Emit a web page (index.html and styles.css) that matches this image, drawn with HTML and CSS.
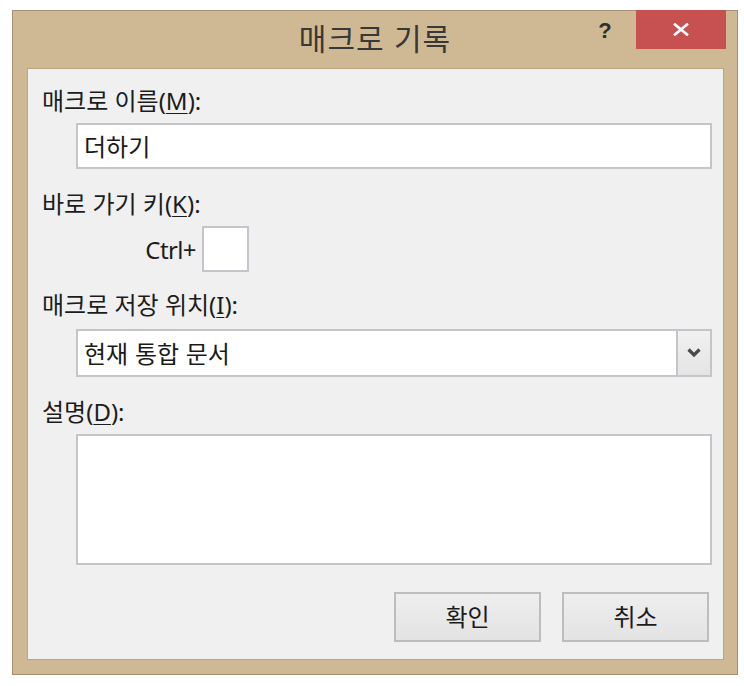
FILE: index.html
```html
<!DOCTYPE html>
<html lang="ko">
<head>
<meta charset="utf-8">
<title>매크로 기록</title>
<link rel="stylesheet" href="styles.css">
</head>
<body>
<div class="window">
  <div class="titlebar">
    <div class="tb-left"></div>
    <div class="title">매크로 기록</div>
    <div class="tb-right">
      <div class="help">?</div>
      <div class="close">
        <svg width="16" height="13" viewBox="0 0 16 13"><path d="M2 1.5 L14 11.5 M14 1.5 L2 11.5" stroke="#ffffff" stroke-width="2.6" stroke-linecap="square" fill="none"/></svg>
      </div>
    </div>
  </div>
  <div class="client">
    <div class="label first">매크로 이름(<u>M</u>):</div>
    <div class="field name">더하기</div>
    <div class="label">바로 가기 키(<u>K</u>):</div>
    <div class="shortcut">
      <span class="ctrl">Ctrl+</span>
      <div class="keybox"></div>
    </div>
    <div class="label loc">매크로 저장 위치(<u>I</u>):</div>
    <div class="field combo">
      <span class="combo-text">현재 통합 문서</span>
      <div class="arrow">
        <svg width="16" height="12" viewBox="0 0 16 12"><path d="M2.5 2.5 L8 8 L13.5 2.5" stroke="#4a4a4a" stroke-width="3.2" fill="none"/></svg>
      </div>
    </div>
    <div class="label desc">설명(<u>D</u>):</div>
    <div class="field memo"></div>
    <div class="buttons">
      <div class="btn">확인</div>
      <div class="btn">취소</div>
    </div>
  </div>
</div>
</body>
</html>
```

FILE: styles.css
```css
* { box-sizing: border-box; }

html, body {
  margin: 0;
  padding: 0;
  background: #ffffff;
}

body {
  font-family: "Noto Sans", "Noto Sans CJK KR", sans-serif;
  color: #1a1a1a;
}

.window {
  margin: 10px 0 0 12px;
  width: 726px;
  background: #cfb994;
  border: 1px solid #a4916f;
  display: flex;
  flex-direction: column;
}

.titlebar {
  height: 57px;
  display: grid;
  grid-template-columns: 1fr auto 1fr;
  align-items: start;
}

.title {
  font-family: "Noto Sans CJK KR", sans-serif;
  font-size: 30px;
  line-height: 52px;
  color: #383838;
  letter-spacing: 1px;
}

.tb-right {
  display: flex;
  justify-content: flex-end;
  align-items: flex-start;
}

.help {
  width: 20px;
  margin-top: 5px;
  margin-right: 21px;
  text-align: center;
  font-family: "Liberation Sans", sans-serif;
  font-weight: bold;
  font-size: 22px;
  line-height: 30px;
  color: #2e2e2e;
}

.close {
  width: 90px;
  height: 39px;
  margin-top: -1px;
  margin-right: 11px;
  background: #c75050;
  display: flex;
  align-items: center;
  justify-content: center;
}

.close svg { display: block; }

.client {
  margin: 0 13px 14px 14px;
  border: 1px solid #baa680;
  background: #f0f0f0;
  padding: 17px 11px 17px 14px;
  display: flex;
  flex-direction: column;
}

.label {
  font-size: 24px;
  line-height: 30px;
  height: 30px;
  margin-top: 20px;
  color: #1c1c1c;
  white-space: nowrap;
}

.label.first { margin-top: 0; }
.label.loc { margin-top: 18px; }

.label u {
  text-decoration-thickness: 1px;
  text-underline-offset: 3px;
}

.field {
  margin-left: 34px;
  margin-top: 7px;
  background: #ffffff;
  border: 2px solid #c4c4cb;
}

.name {
  height: 46px;
  padding-left: 6px;
  font-size: 24px;
  line-height: 42px;
  font-family: "Noto Sans CJK KR", sans-serif;
  color: #1a1a1a;
}

.shortcut {
  margin-top: 7px;
  height: 46px;
  display: flex;
  align-items: center;
  gap: 6px;
}

.ctrl {
  width: 154px;
  text-align: right;
  font-size: 24px;
  letter-spacing: -0.6px;
  color: #1c1c1c;
}

.keybox {
  width: 47px;
  height: 46px;
  background: #ffffff;
  border: 2px solid #c4c4cb;
}

.combo {
  margin-top: 9px;
  height: 48px;
  display: flex;
  align-items: stretch;
}

.combo-text {
  flex: 1;
  padding-left: 6px;
  font-family: "Noto Sans CJK KR", sans-serif;
  font-size: 24px;
  line-height: 44px;
  color: #1a1a1a;
}

.arrow {
  width: 34px;
  border-left: 2px solid #c4c4cb;
  background: linear-gradient(#f1f1f1, #e4e4e4);
  display: flex;
  align-items: center;
  justify-content: center;
}

.arrow svg { display: block; }

.label.desc { margin-top: 20px; }

.memo {
  height: 131px;
}

.buttons {
  margin-top: 27px;
  margin-right: 3px;
  display: flex;
  justify-content: flex-end;
  gap: 21px;
}

.btn {
  width: 147px;
  height: 50px;
  border: 2px solid #bdbdbd;
  background: linear-gradient(#eeeeee, #e3e3e3);
  font-family: "Noto Sans CJK KR", sans-serif;
  font-size: 24px;
  line-height: 44px;
  text-align: center;
  color: #1c1c1c;
}
```
